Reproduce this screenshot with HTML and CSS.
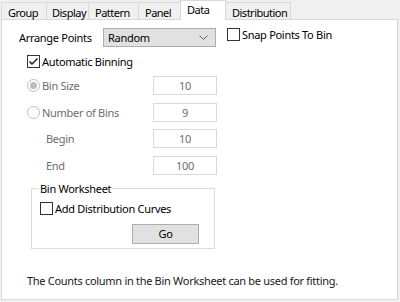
FILE: index.html
```html
<!DOCTYPE html>
<html>
<head>
<meta charset="utf-8">
<link rel="stylesheet" href="styles.css">
</head>
<body>
<div class="window">
  <div class="tabs">
    <div class="tab t-group">Group</div>
    <div class="tab t-display">Display</div>
    <div class="tab t-pattern">Pattern</div>
    <div class="tab t-panel">Panel</div>
    <div class="tab active t-data">Data</div>
    <div class="tab t-dist">Distribution</div>
  </div>
  <div class="panel">
    <div class="row-arrange">
      <span class="lbl-arrange">Arrange Points</span>
      <div class="select">
        <span>Random</span>
        <svg class="chev" width="9" height="5" viewBox="0 0 9 5"><polyline points="0.5,0.5 4.5,4.5 8.5,0.5" fill="none" stroke="#606060" stroke-width="1"/></svg>
      </div>
      <div class="check snap"><span class="box"></span><span>Snap Points To Bin</span></div>
    </div>
    <div class="check auto">
      <span class="box"><svg width="11" height="11" viewBox="0 0 11 11"><polyline points="1.5,5.5 4,8 9.5,2.5" fill="none" stroke="#111" stroke-width="1.4"/></svg></span>
      <span>Automatic Binning</span>
    </div>
    <div class="fields">
      <div class="field"><span class="radio on"></span><span class="flabel">Bin Size</span><span class="input">10</span></div>
      <div class="field"><span class="radio"></span><span class="flabel">Number of Bins</span><span class="input">9</span></div>
      <div class="field"><span class="flabel indent">Begin</span><span class="input">10</span></div>
      <div class="field"><span class="flabel indent">End</span><span class="input">100</span></div>
    </div>
    <fieldset class="group">
      <legend>Bin Worksheet</legend>
      <div class="check curves"><span class="box"></span><span>Add Distribution Curves</span></div>
      <div class="btn">Go</div>
    </fieldset>
    <p class="note">The Counts column in the Bin Worksheet can be used for fitting.</p>
  </div>
</div>
</body>
</html>
```

FILE: styles.css
```css
* { box-sizing: border-box; }
html, body {
  margin: 0;
  background: #f0f0f0;
  font-family: "Noto Sans", "Open Sans", sans-serif;
  font-size: 11px;
  letter-spacing: -0.3px;
  color: #000;
}
.window {
  width: 400px;
  height: 302px;
  padding-left: 1px;
}
.tabs {
  display: flex;
  height: 19px;
  align-items: flex-end;
}
.tab {
  height: 17px;
  border: 1px solid #d9d9d9;
  border-bottom: none;
  margin-right: -1px;
  background: #f0f0f0;
  line-height: 17px;
  padding: 1px 0 0 6px;
  letter-spacing: -0.5px;
  white-space: nowrap;
}
.t-group { width: 46px; }
.t-display { width: 43px; padding-left: 5px; }
.t-pattern { width: 51px; }
.t-panel { width: 43px; }
.t-data { width: 46px; }
.t-dist { width: 66px; }
.tab.active {
  height: 20px;
  background: #fff;
  position: relative;
  z-index: 1;
  margin-bottom: -1px;
  line-height: 18px;
  padding-top: 0;
}
.panel {
  width: 397px;
  height: 281px;
  background: #fff;
  border: 1px solid #d9d9d9;
}
.row-arrange {
  display: flex;
  margin-top: 8px;
  height: 19px;
  align-items: center;
}
.lbl-arrange {
  margin-left: 17px;
  flex: 0 0 84px;
}
.select {
  width: 113px;
  height: 19px;
  border: 1px solid #adadad;
  background: #e1e1e1;
  display: flex;
  align-items: center;
  justify-content: space-between;
  padding: 0 7px 0 4px;
}
.chev { display: block; }
.check {
  display: flex;
  align-items: center;
  height: 13px;
}
.box {
  width: 13px;
  height: 13px;
  border: 1px solid #333;
  background: #fff;
  margin-right: 2px;
  flex: none;
  display: flex;
  align-items: center;
  justify-content: center;
}
.box svg { display: block; }
.snap {
  margin-left: 11px;
  align-self: flex-start;
}
.auto {
  margin: 8px 0 0 25px;
}
.fields {
  margin: 8px 0 0 25px;
  display: flex;
  flex-direction: column;
  gap: 7.7px;
}
.field {
  display: flex;
  align-items: center;
  height: 19px;
  color: #6d6d6d;
}
.radio {
  width: 13px;
  height: 13px;
  border-radius: 50%;
  border: 1px solid #bcbcbc;
  background: #fff;
  margin-right: 2px;
  flex: none;
  display: flex;
  align-items: center;
  justify-content: center;
}
.radio.on::after {
  content: "";
  width: 7px;
  height: 7px;
  border-radius: 50%;
  background: #bcbcbc;
}
.flabel {
  flex: 1;
}
.flabel.indent {
  padding-left: 19px;
}
.input {
  flex: 0 0 64px;
  height: 19px;
  border: 1px solid #d9d9d9;
  text-align: center;
  line-height: 17px;
  color: #6d6d6d;
  margin-right: 180px;
}
.group {
  margin: 6px 0 0 29px;
  width: 184px;
  padding: 0 0 4px 0;
  border: 1px solid #dcdcdc;
}
.group legend {
  margin-left: 7px;
  padding: 0 1px;
  line-height: 15px;
}
.curves {
  margin: 6px 0 0 8px;
}
.btn {
  margin: 9px 0 0 100px;
  width: 67px;
  height: 20px;
  border: 1px solid #adadad;
  background: #e1e1e1;
  text-align: center;
  line-height: 18px;
}
.note {
  margin: 24px 0 0 25px;
  line-height: 15px;
  color: #1a1a1a;
}
```
